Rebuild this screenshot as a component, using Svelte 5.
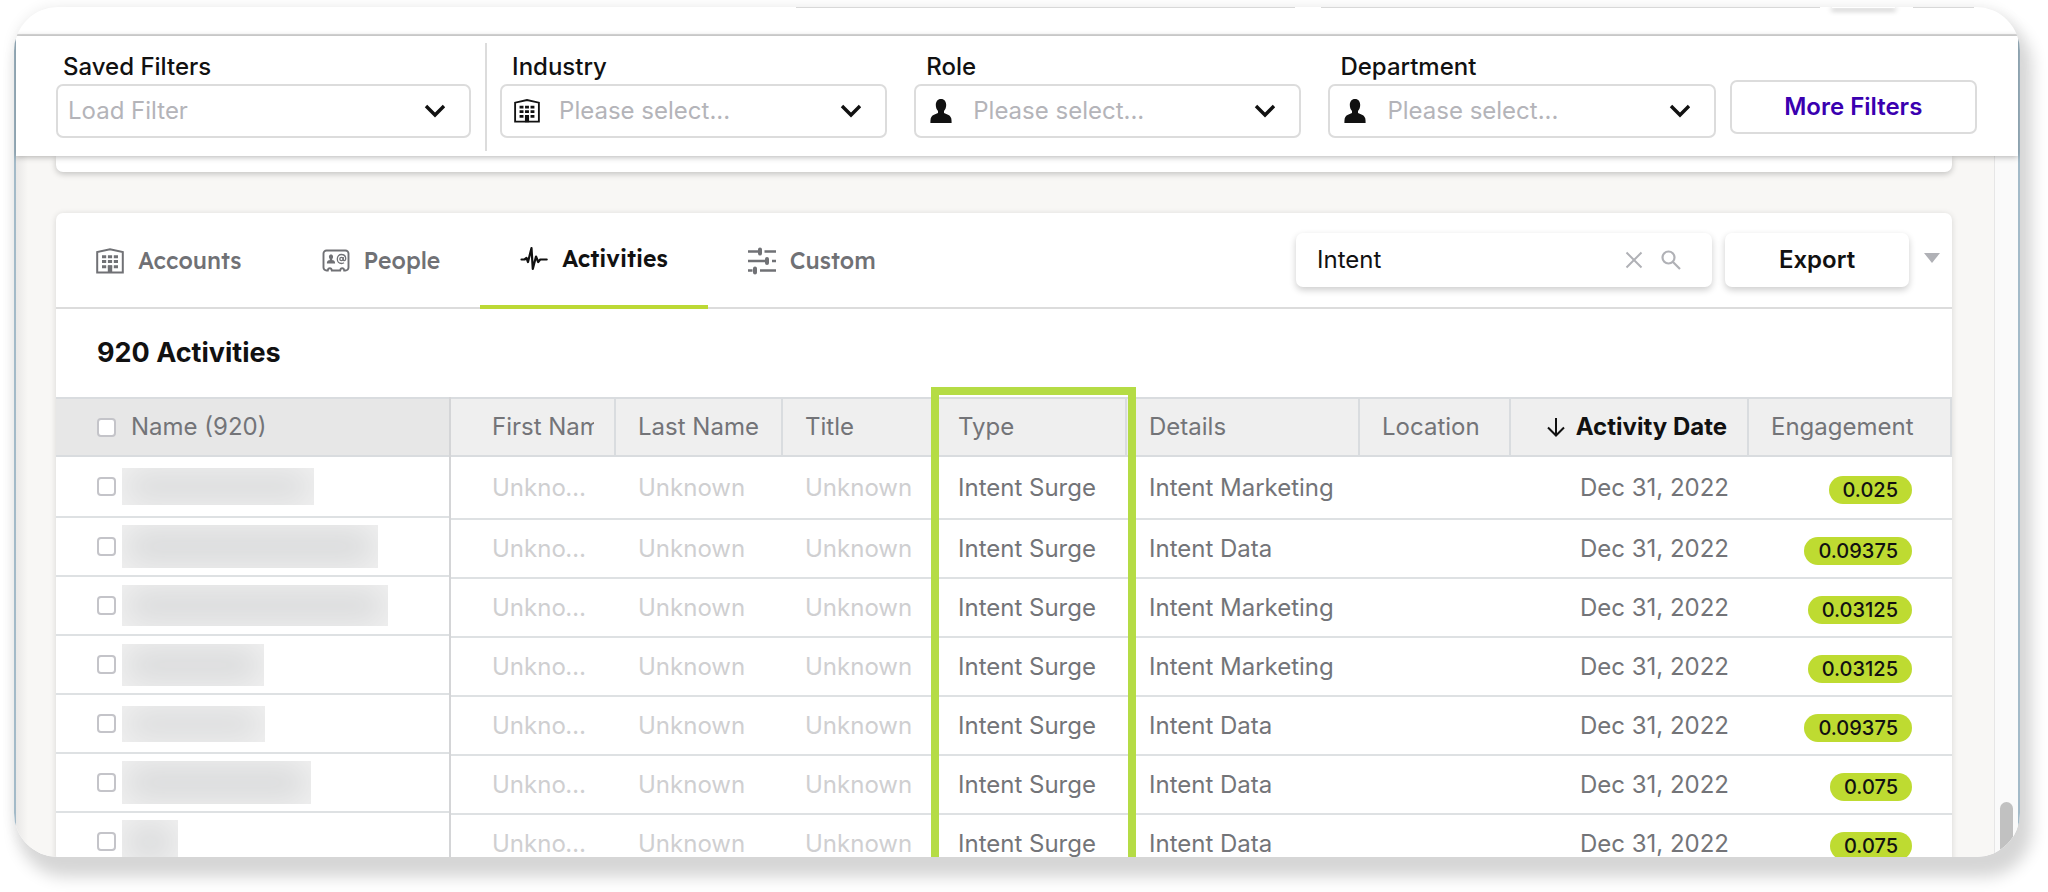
<script>
    const filters = [
        { id: "industry", label: "Industry", icon: "building" },
        { id: "role", label: "Role", icon: "person" },
        { id: "department", label: "Department", icon: "person" },
    ];

    const tabs = ["Accounts", "People", "Activities", "Custom"];
    let activeTab = $state("Activities");
    let search = $state("Intent");

    const columns = [
        { name: "First Name", width: 165 },
        { name: "Last Name", width: 167 },
        { name: "Title", width: 153 },
        { name: "Type", width: 191 },
        { name: "Details", width: 233 },
        { name: "Location", width: 151 },
        { name: "Activity Date", width: 238, sorted: true },
        { name: "Engagement", width: 203 },
    ];
    const total = columns.reduce((sum, c) => sum + c.width, 0);
    const percent = (n) => (n / total) * 100;

    // the outlined column
    const typeIndex = columns.findIndex((c) => c.name === "Type");
    const typeLeft = percent(columns.slice(0, typeIndex).reduce((sum, c) => sum + c.width, 0));
    const typeWidth = percent(columns[typeIndex].width);

    // w and h are the size of the hidden account name
    const rows = [
        { details: "Intent Marketing", score: "0.025", w: 192, h: 37 },
        { details: "Intent Data", score: "0.09375", w: 256, h: 43 },
        { details: "Intent Marketing", score: "0.03125", w: 266, h: 41 },
        { details: "Intent Marketing", score: "0.03125", w: 142, h: 42 },
        { details: "Intent Data", score: "0.09375", w: 143, h: 36 },
        { details: "Intent Data", score: "0.075", w: 189, h: 43 },
        { details: "Intent Data", score: "0.075", w: 56, h: 44 },
    ];
</script>

{#snippet building(size)}
    <svg width={size} height={size} viewBox="0 0 28 28" fill="none" stroke="currentColor" aria-hidden="true">
        <path d="M1.2 25.4V5L14 2.2 26.8 5v20.4z" stroke-width="2" />
        <path d="M6 9.8h16M6 14.6h16M6 19.8h16" stroke-width="3" stroke-dasharray="4.2 1.7" />
        <path d="M14 18.5V26" stroke-width="4.4" />
    </svg>
{/snippet}

{#snippet person()}
    <svg width="24" height="26" viewBox="0 0 24 26" fill="currentColor" aria-hidden="true">
        <path d="M12 1c3.500 0 5.200 2.700 5.200 6 0 2.600-.9 4.600-2.200 6v2c3 1.400 6.500 2 7.300 5.600.3 1.500.3 3 .3 4.400H1.400c0-1.400 0-2.900.3-4.400C2.500 17 6 16.400 9 15v-2c-1.300-1.400-2.200-3.400-2.200-6 0-3.300 1.700-6 5.200-6z" />
    </svg>
{/snippet}

{#snippet chevron()}
    <svg width="22" height="16" viewBox="0 0 22 16" fill="none" stroke="#111" stroke-width="3.400" aria-hidden="true">
        <path d="M2 3l9 9 9-9" />
    </svg>
{/snippet}

{#snippet tabIcon(name)}
    {#if name === "Accounts"}
        {@render building(28)}
    {:else if name === "People"}
        <svg width="28" height="28" viewBox="0 0 28 28" fill="none" stroke="currentColor" aria-hidden="true">
            <path d="M4.500 3.500h19a3 3 0 0 1 3 3v14a3 3 0 0 1-3 3h-1.300c-.2-1.600-.8-2.300-2-2.300s-1.800.7-2 2.300h-8.400c-.2-1.600-.8-2.300-2-2.300s-1.800.7-2 2.300H4.500a3 3 0 0 1-3-3v-14a3 3 0 0 1 3-3z" stroke-width="1.900" />
            <path d="M9 7.500c1.500 0 2.100 1 2.100 2.300 0 1-.4 1.700-.9 2.200v1c1.400.4 2.900.7 2.900 3.500H4.900c0-2.800 1.500-3.100 2.900-3.500v-1c-.5-.5-.9-1.200-.9-2.200 0-1.300.6-2.300 2.100-2.300z" fill="currentColor" stroke="none" />
            <circle cx="19.500" cy="12" r="1.700" stroke-width="1.300" />
            <path d="M21.200 10v2.600c0 1.600 2.500 1.400 2.500-.8 0-2.600-1.800-4.300-4.200-4.300s-4.200 1.900-4.200 4.500 1.800 4.500 4.200 4.500c1 0 1.800-.2 2.500-.7" stroke-width="1.300" />
        </svg>
    {:else if name === "Activities"}
        <svg width="28" height="28" viewBox="0 0 28 28" fill="none" stroke="currentColor" stroke-width="2.200" stroke-linejoin="round" stroke-linecap="round" aria-hidden="true">
            <path d="M1.500 14.500h3l2-1.500 1.500 4 3.500-14 1.300 21L16 11.500l2.200 5.500 2-2.500h6.500" />
        </svg>
    {:else}
        <svg width="28" height="28" viewBox="0 0 28 28" stroke="currentColor" aria-hidden="true">
            <path d="M0 4.500h10M16.500 4.500H28M0 14h17M24 14h4M0 23.500h4.500M12 23.500h16" stroke-width="2.600" />
            <path d="M12 2.500v4M19 12v4M7 21.500v4" stroke-width="4" stroke-linecap="round" />
        </svg>
    {/if}
{/snippet}

<div class="page">
    <div class="window">
        <div class="topbar">
            <div class="peek long"></div>
            <div class="peek long"></div>
            <div class="peek pill"></div>
            <div class="peek short"></div>
        </div>

        <div class="frame">
            <div class="filter-bar">
                <div class="field saved">
                    <label for="saved">Saved Filters</label>
                    <div class="select">
                        <select id="saved"><option>Load Filter</option></select>
                        {@render chevron()}
                    </div>
                </div>
                <div class="divider"></div>
                <div class="filters">
                    {#each filters as filter}
                        <div class="field">
                            <label for={filter.id}>{filter.label}</label>
                            <div class="select">
                                <span class="select-icon">
                                    {#if filter.icon === "building"}{@render building(26)}{:else}{@render person()}{/if}
                                </span>
                                <select id={filter.id}><option>Please select...</option></select>
                                {@render chevron()}
                            </div>
                        </div>
                    {/each}
                </div>
                <button class="more">More Filters</button>
            </div>

            <div class="body">
                <main>
                    <div class="previous"></div>
                    <section class="card">
                        <div class="toolbar">
                            <div class="tabs" role="tablist">
                                {#each tabs as tab}
                                    <button
                                        class="tab"
                                        class:active={activeTab === tab}
                                        role="tab"
                                        aria-selected={activeTab === tab}
                                        onclick={() => (activeTab = tab)}
                                    >
                                        {@render tabIcon(tab)}
                                        {tab}
                                    </button>
                                {/each}
                            </div>
                            <div class="search">
                                <input type="text" aria-label="Search activities" bind:value={search} />
                                <button class="icon-button" aria-label="Clear" onclick={() => (search = "")}>
                                    <svg width="18" height="18" viewBox="0 0 18 18" stroke="currentColor" stroke-width="2" aria-hidden="true">
                                        <path d="M1.500 1.500l15 15M16.500 1.500l-15 15" />
                                    </svg>
                                </button>
                                <button class="icon-button" aria-label="Search">
                                    <svg width="20" height="20" viewBox="0 0 20 20" fill="none" stroke="currentColor" stroke-width="2.200" aria-hidden="true">
                                        <circle cx="7.500" cy="7.500" r="6" />
                                        <path d="M12 12l7 7" />
                                    </svg>
                                </button>
                            </div>
                            <button class="export">Export</button>
                            <button class="icon-button" aria-label="Export options">
                                <svg width="16" height="14" viewBox="0 0 16 14" fill="currentColor" aria-hidden="true"><path d="M0 0h16L8 10z" /></svg>
                            </button>
                        </div>

                        <h2>920 Activities</h2>

                        <div class="grid">
                            <table class="pinned">
                                <thead>
                                    <tr>
                                        <th>
                                            <label class="name">
                                                <input type="checkbox" />
                                                Name (920)
                                            </label>
                                        </th>
                                    </tr>
                                </thead>
                                <tbody>
                                    {#each rows as row, i}
                                        <tr>
                                            <td>
                                                <div class="name">
                                                    <input type="checkbox" aria-label={`Select row ${i + 1}`} />
                                                    <span class="hidden-name" style:width={`${row.w}px`} style:height={`${row.h}px`}></span>
                                                </div>
                                            </td>
                                        </tr>
                                    {/each}
                                </tbody>
                            </table>

                            <div class="scroller">
                                <table>
                                    <colgroup>
                                        {#each columns as column}
                                            <col style:width={`${percent(column.width)}%`} />
                                        {/each}
                                    </colgroup>
                                    <thead>
                                        <tr>
                                            {#each columns as column}
                                                <th class:sorted={column.sorted}>
                                                    <div class="clip">
                                                        {#if column.sorted}
                                                            <svg width="20" height="20" viewBox="0 0 20 20" fill="none" stroke="currentColor" stroke-width="2" aria-hidden="true">
                                                                <path d="M10 1v17M2 10.500l8 8 8-8" />
                                                            </svg>
                                                        {/if}
                                                        {column.name}
                                                    </div>
                                                </th>
                                            {/each}
                                        </tr>
                                    </thead>
                                    <tbody>
                                        {#each rows as row}
                                            <tr>
                                                <td class="unknown">Unknown</td>
                                                <td class="unknown">Unknown</td>
                                                <td class="unknown">Unknown</td>
                                                <td>Intent Surge</td>
                                                <td>{row.details}</td>
                                                <td></td>
                                                <td class="date">Dec 31, 2022</td>
                                                <td class="engagement"><span class="badge">{row.score}</span></td>
                                            </tr>
                                        {/each}
                                    </tbody>
                                </table>
                                <div
                                    class="highlight"
                                    style:left={`calc(${typeLeft}% - 5px)`}
                                    style:width={`calc(${typeWidth}% + 14px)`}
                                ></div>
                            </div>
                        </div>
                    </section>
                </main>
                <div class="track"><div class="thumb"></div></div>
            </div>
        </div>
    </div>
</div>

<style>
    :global(body) {
        margin: 0;
        background: #fff;
    }
    .page, .page * {
        box-sizing: border-box;
    }
    .page {
        height: 100vh;
        padding: 7px 28px 35px 14px;
        overflow: hidden;
    }
    .window {
        display: flex;
        flex-direction: column;
        height: 100%;
        border-radius: 44px;
        overflow: hidden;
        background: #fff;
        box-shadow: 8px 16px 16px 4px #d6d6d6, 0 0 14px rgba(0, 0, 0, 0.08);
        font-family: Inter, "Liberation Sans", sans-serif;
        font-size: 24px;
        line-height: 30px;
        color: #111;
    }
    button, select, input {
        font: inherit;
        color: inherit;
    }
    button {
        border: none;
        background: #fff;
        padding: 0;
        cursor: pointer;
    }
    svg {
        display: block;
        flex: none;
    }

    /* bottom edges of the controls scrolled off above */
    .topbar {
        flex: none;
        display: flex;
        align-items: flex-start;
        height: 29px;
        padding: 0 46px 0 39%;
        border-bottom: 2px solid #dcdcdc;
    }
    .peek {
        height: 1px;
        background: #d8d8d8;
    }
    .long {
        flex: 498;
        margin-right: 26px;
    }
    .long + .long {
        margin-right: 12px;
    }
    .pill {
        flex: 63;
        margin-right: 18px;
        background: #fff;
        border-radius: 4px;
        box-shadow: 0 2px 5px 1px rgba(0, 0, 0, 0.25);
    }
    .short {
        flex: 61;
    }

    .frame {
        flex: 1;
        min-height: 0;
        display: flex;
        flex-direction: column;
        border: solid #a3bac8;
        border-width: 0 2px;
    }
    .filter-bar {
        position: relative;
        z-index: 1;
        flex: none;
        display: flex;
        align-items: flex-end;
        padding: 7px 41px 5px 40px;
        background: #fff;
        box-shadow: 0 1px 6px rgba(0, 0, 0, 0.3);
    }
    .field {
        flex: 1 1 0;
        min-width: 0;
        margin-bottom: 13px;
    }
    .field.saved {
        flex: 416 1 0;
    }
    .field label {
        display: block;
        margin: 0 0 2px 12px;
        font-weight: 500;
    }
    .saved label {
        margin-left: 7px;
    }
    .divider {
        width: 2px;
        height: 108px;
        margin: 0 13px 0 14px;
        background: #dcdcdc;
    }
    .filters {
        flex: 1218 1 0;
        display: flex;
        gap: 27px;
    }
    .select {
        display: flex;
        align-items: center;
        height: 54px;
        padding: 0 23px 0 10px;
        border: 2px solid #dcdcdc;
        border-radius: 7px;
    }
    .select select {
        flex: 1;
        min-width: 0;
        padding: 0;
        appearance: none;
        border: none;
        background: none;
        color: #b4b4b9;
    }
    .select-icon {
        display: flex;
        justify-content: center;
        width: 30px;
        margin-right: 17px;
    }
    .more {
        flex: 244 1 0;
        height: 54px;
        margin: 0 0 17px 14px;
        border: 2px solid #dcdcdc;
        border-radius: 7px;
        font-weight: 600;
        color: #3a00b0;
    }

    .body {
        flex: 1;
        min-height: 0;
        display: flex;
    }
    main {
        flex: 1;
        min-width: 0;
        padding: 0 42px 0 40px;
        overflow: hidden;
        background: linear-gradient(to right, #e9e8e7, #f8f7f5 12px);
    }
    .previous {
        height: 16px;
        margin-bottom: 41px;
        border-radius: 0 0 7px 7px;
        background: #fff;
        box-shadow: 0 2px 6px rgba(0, 0, 0, 0.22);
    }
    .track {
        display: flex;
        align-items: flex-end;
        width: 24px;
        padding-left: 5px;
        border-left: 1px solid #e6e6e6;
        background: #fafafa;
    }
    .thumb {
        width: 13px;
        height: 55px;
        border-radius: 7px 7px 0 0;
        background: #c1c1c1;
    }

    .card {
        border-radius: 7px;
        background: #fff;
        box-shadow: 0 1px 6px rgba(0, 0, 0, 0.14);
    }
    .toolbar {
        display: flex;
        align-items: center;
        height: 96px;
        padding-right: 12px;
        border-bottom: 2px solid #dcdcdc;
    }
    .tabs {
        display: flex;
        flex: 1;
        align-self: stretch;
        margin-bottom: -2px;
    }
    .tab {
        display: flex;
        align-items: center;
        gap: 14px;
        padding: 0 40px;
        background: none;
        font-family: Lexend, Inter, sans-serif;
        font-size: 23px;
        font-weight: 500;
        color: #707175;
    }
    .tab.active {
        border-bottom: 4px solid #bcd935;
        color: #111;
        font-weight: 600;
    }
    .search {
        display: flex;
        align-items: center;
        gap: 18px;
        width: 416px;
        height: 54px;
        padding: 0 31px 0 21px;
        border-radius: 7px;
        box-shadow: 0 3px 7px rgba(0, 0, 0, 0.2);
    }
    .search input {
        flex: 1;
        min-width: 0;
        padding: 0;
        border: none;
        outline: none;
    }
    .icon-button {
        background: none;
        color: #b0b1b6;
    }
    .export {
        width: 184px;
        height: 54px;
        margin: 0 15px 0 13px;
        border-radius: 7px;
        box-shadow: 0 3px 7px rgba(0, 0, 0, 0.2);
        font-weight: 600;
    }
    h2 {
        margin: 0;
        padding: 29px 41px;
        font-size: 27px;
        line-height: 30px;
        font-weight: 700;
    }

    .grid {
        display: flex;
    }
    .scroller {
        position: relative;
        flex: 1501 1 0;
    }
    .highlight {
        position: absolute;
        top: -10px;
        bottom: 0;
        border: 8px solid #b5dc45;
        border-bottom: none;
        pointer-events: none;
    }
    table {
        width: 100%;
        table-layout: fixed;
        border-collapse: separate;
        border-spacing: 0;
        color: #737478;
    }
    .pinned {
        flex: 393 1 0;
        width: auto;
        border-right: 2px solid #d4d5d7;
        align-self: flex-start;
    }
    th {
        height: 60px;
        padding: 0 20px 0 22px;
        border: solid #d9dcdf;
        border-width: 2px 2px 2px 0;
        background: #efefef;
        text-align: left;
        font-weight: 400;
    }
    .pinned th {
        border-right: none;
        background: #e7e7e7;
    }
    th:first-child, td:first-child {
        padding-left: 41px;
    }
    .clip {
        display: flex;
        align-items: center;
        gap: 10px;
        overflow: hidden;
        white-space: nowrap;
    }
    .sorted {
        font-weight: 700;
        color: #111;
    }
    .sorted .clip {
        justify-content: flex-end;
    }
    td {
        height: 59px;
        padding: 0 20px 0 22px;
        border-bottom: 2px solid #dee1e3;
        overflow: hidden;
        text-overflow: ellipsis;
        white-space: nowrap;
    }
    tbody tr:first-child td {
        height: 63px;
    }
    .pinned tbody tr:first-child td {
        height: 61px;
    }
    .unknown {
        color: #cfcfd1;
    }
    .date {
        text-align: right;
    }
    td.engagement {
        padding: 2px 40px 0 0;
        text-align: right;
    }
    .badge {
        display: inline-block;
        padding: 0 14px;
        border-radius: 14px;
        background: #bedb31;
        font-size: 20px;
        line-height: 28px;
        font-weight: 500;
        color: #111;
    }

    .name {
        display: flex;
        align-items: center;
    }
    .name input {
        flex: none;
        appearance: none;
        width: 19px;
        height: 19px;
        margin: 0 6px 0 0;
        border: 2px solid #c4c4c9;
        border-radius: 4px;
        background: #fff;
    }
    label.name input {
        margin-right: 15px;
    }
    .hidden-name {
        background: #d8d9da;
        box-shadow: inset 0 0 32px 4px #f2f2f2;
    }
</style>
